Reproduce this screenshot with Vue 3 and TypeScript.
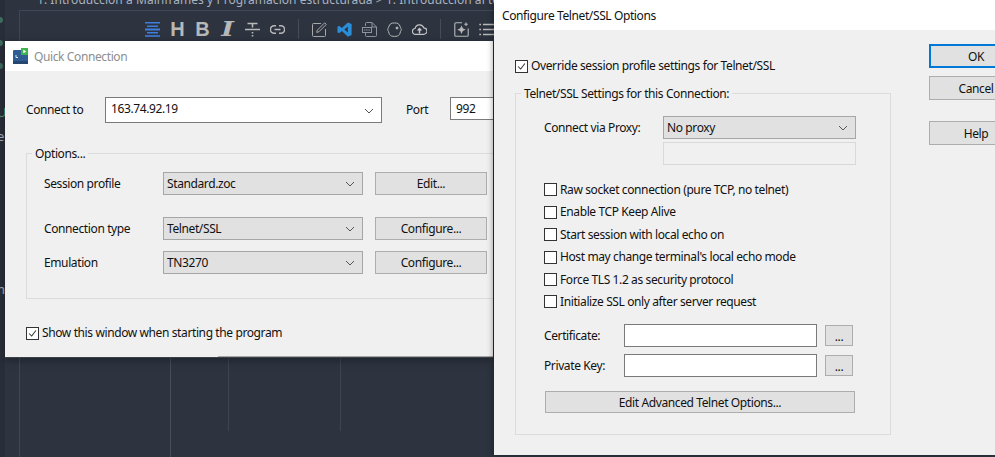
<template>
  <div class="stage">
    <div class="rail">
      <span v-for="y in 3" :key="y" class="rail-dot"></span>
      <span class="rail-u">U</span>
      <span class="rail-e">e</span>
      <span class="rail-n">n</span>
    </div>

    <div class="editor">
      <div class="crumb">1. Introducción a Mainframes y Programación estructurada &gt; 1. Introducción al tema</div>
      <div class="editor-box">
        <div class="toolbar">
          <svg class="ico" viewBox="0 0 15 15" fill="#3f7fdc">
            <rect x="0" y="0" width="15" height="1.5" />
            <rect x="2" y="3.5" width="11" height="1.5" />
            <rect x="0" y="6.5" width="15" height="2" />
            <rect x="2" y="10" width="11" height="1.5" />
            <rect x="0" y="13.2" width="15" height="1.6" />
          </svg>
          <span class="ico glyph">H</span>
          <span class="ico glyph">B</span>
          <span class="ico glyph slant">I</span>
          <svg class="ico" viewBox="0 0 15 15" fill="none" stroke="#b8b8b8" stroke-width="1.6">
            <path d="M0 7.500h15M2.500 1.500h10M7.500 1.500v4M7.500 10v1.500M7.500 13v1.500" />
          </svg>
          <svg class="ico" viewBox="0 0 15 15" fill="none" stroke="#b8b8b8" stroke-width="1.5">
            <path d="M6 3.700H4.200a3.800 3.800 0 0 0 0 7.600H6M9 3.700h1.800a3.800 3.800 0 0 1 0 7.600H9M4.500 7.500h6" />
          </svg>
          <i class="sep"></i>
          <svg class="ico" viewBox="0 0 15 15" fill="none" stroke="#a9a9a9" stroke-width="1">
            <path d="M9 1.500H1.500a1 1 0 0 0-1 1v11a1 1 0 0 0 1 1h11a1 1 0 0 0 1-1V7" />
            <path d="M12.700.8l1.600 1.600-7.400 7.400-2.200.6.6-2.200z" />
          </svg>
          <svg class="ico" viewBox="0 0 16 16" fill="#2b8ed9">
            <path fill-rule="evenodd" d="M11.600.4 15.600 2.200V13.800L11.600 15.600 5.200 9.500 2.200 11.900.5 11V5L2.200 4.100 5.200 6.500ZM11.600 4.700 7.800 8 11.600 11.300Z" />
          </svg>
          <svg class="ico" viewBox="0 0 15 15" fill="none" stroke="#8f959e" stroke-width="1">
            <path d="M3.500 4V1.500a1 1 0 0 1 1-1H10L14.500 5v8.500a1 1 0 0 1-1 1h-9a1 1 0 0 1-1-1V11" />
            <path d="M10 .5V5h4.500" />
            <rect x=".5" y="5.500" width="9" height="5" />
            <path d="M2 8h6" stroke-dasharray="1.500 .7" />
          </svg>
          <svg class="ico" viewBox="0 0 15 15" fill="none" stroke="#b8b8b8" stroke-width="1">
            <path d="M4 1.500C5 .8 10 .8 11 1.500 12 2.200 12.800 3.500 13.500 5.500 14.500 7 14.500 8 13.500 9.500 13 12 12 13.500 10.500 14 8.500 14.500 6.500 14.500 4.500 14 3 13.500 2 12 1.500 9.500 .5 8 .5 7 1.500 5.500 2.200 3.500 3 2.200 4 1.500Z" />
            <circle cx="10" cy="6" r="1" fill="#b8b8b8" />
          </svg>
          <svg class="ico" viewBox="0 0 15 15" fill="none" stroke="#c4c4c4" stroke-width="1.200">
            <path d="M3.800 12.300H3.500a2.900 2.900 0 0 1-.4-5.800 4.500 4.500 0 0 1 8.700-.6 3.200 3.200 0 0 1-.2 6.400h-7.800Z" />
            <path d="M7.500 11.500V6.800M5.600 8.500l1.900-1.900 1.900 1.900" stroke-width="1.400" />
          </svg>
          <i class="sep"></i>
          <svg class="ico" viewBox="0 0 15 15" fill="none" stroke="#b8b8b8" stroke-width="1.100">
            <path d="M8 .8H1.800a1 1 0 0 0-1 1v11.400a1 1 0 0 0 1 1h11.400a1 1 0 0 0 1-1V6.500" />
            <path d="M7.500 4.800 8.400 6.800 10.400 7.700 8.400 8.600 7.500 10.600 6.600 8.600 4.600 7.700 6.600 6.800Z" fill="#b8b8b8" />
            <path d="M12 .5V4M10.300 2.200h3.500" />
          </svg>
          <svg class="ico" viewBox="0 0 15 15" fill="none" stroke="#b8b8b8" stroke-width="1.400">
            <path d="M4 2.500h11M4 7.500h11M4 12.500h11M.3 2.500h1.800M.3 7.500h1.800M.3 12.500h1.800" />
          </svg>
        </div>
        <div class="doc-cols">
          <div class="col-gap"></div>
          <div class="col-main">
            <div class="col-cell cell-a"></div>
            <div class="col-cell cell-b"></div>
          </div>
        </div>
      </div>
    </div>

    <section class="win quick">
      <header class="titlebar">
        <svg class="app-icon" viewBox="0 0 16 16">
          <rect x="0" y="2" width="15" height="14" rx="1" fill="#2f5c92" />
          <rect x="0" y="13" width="15" height="3" fill="#24466f" />
          <path d="M3 7v2.500h2" stroke="#dbe6f2" fill="none" stroke-width="1" />
          <rect x="8" y="0" width="7" height="7" fill="#3fb34f" />
          <path d="M10.300 1.700l3 1.800-3 1.800z" fill="#fff" />
        </svg>
        <span class="title-muted">Quick Connection</span>
      </header>
      <div class="quick-body">
        <div class="connect-row">
          <label class="connect-label">Connect to</label>
          <div class="combo-input">
            <span>163.74.92.19</span>
            <svg class="chev" viewBox="0 0 10 6"><path d="M1 1l4 4 4-4" /></svg>
          </div>
          <label class="port-label">Port</label>
          <div class="port-input">992</div>
        </div>

        <div class="group quick-group">
          <div class="legend">Options...</div>
          <div class="opt-grid">
            <span>Session profile</span>
            <div class="select"><span>Standard.zoc</span><svg class="chev" viewBox="0 0 10 6"><path d="M1 1l4 4 4-4" /></svg></div>
            <button class="btn opt-btn">Edit...</button>

            <span>Connection type</span>
            <div class="select"><span>Telnet/SSL</span><svg class="chev" viewBox="0 0 10 6"><path d="M1 1l4 4 4-4" /></svg></div>
            <button class="btn opt-btn">Configure...</button>

            <span>Emulation</span>
            <div class="select"><span>TN3270</span><svg class="chev" viewBox="0 0 10 6"><path d="M1 1l4 4 4-4" /></svg></div>
            <button class="btn opt-btn">Configure...</button>
          </div>
        </div>

        <label class="check show-check">
          <span class="box">
            <svg viewBox="0 0 13 13"><path d="M2.500 6.500l3 3 5-6.500" /></svg>
          </span>
          Show this window when starting the program
        </label>
      </div>
      <i class="quick-edge"></i>
    </section>

    <section class="win config">
      <header class="titlebar config-title">Configure Telnet/SSL Options</header>
      <div class="config-body">
        <div class="config-main">
          <label class="check">
            <span class="box">
              <svg viewBox="0 0 13 13"><path d="M2.500 6.500l3 3 5-6.500" /></svg>
            </span>
            Override session profile settings for Telnet/SSL
          </label>

          <div class="group config-group">
            <div class="legend">Telnet/SSL Settings for this Connection:</div>
            <div class="proxy-grid">
              <span>Connect via Proxy:</span>
              <div class="select"><span>No proxy</span><svg class="chev" viewBox="0 0 10 6"><path d="M1 1l4 4 4-4" /></svg></div>
              <span></span>
              <div class="disabled-field"></div>
            </div>

            <div class="check-list">
              <label v-for="item in checks" :key="item" class="check">
                <span class="box"></span>
                {{ item }}
              </label>
            </div>

            <div class="file-grid">
              <template v-for="row in fileRows" :key="row">
                <span>{{ row }}</span>
                <div class="text-field"></div>
                <button class="btn dots">...</button>
              </template>
            </div>

            <button class="btn advanced">Edit Advanced Telnet Options...</button>
          </div>
        </div>

        <div class="config-side">
          <button class="btn side-btn default-btn">OK</button>
          <button class="btn side-btn">Cancel</button>
          <button class="btn side-btn help-btn">Help</button>
        </div>
      </div>
    </section>
  </div>
</template>

<script setup lang="ts">
const checks: string[] = [
  'Raw socket connection (pure TCP, no telnet)',
  'Enable TCP Keep Alive',
  'Start session with local echo on',
  "Host may change terminal's local echo mode",
  'Force TLS 1.2 as security protocol',
  'Initialize SSL only after server request'
];

const fileRows: string[] = ['Certificate:', 'Private Key:'];
</script>

<style>
html,
body {
  margin: 0;
  background: #2d3440;
}
</style>

<style scoped>
.stage {
  position: relative;
  display: flex;
  width: 995px;
  height: 457px;
  overflow: hidden;
  background: #2d3440;
  font-family: "Noto Sans", sans-serif;
  font-size: 12px;
  letter-spacing: -0.39px;
  color: #111;
}

.rail {
  display: flex;
  flex-direction: column;
  flex: none;
  width: 5px;
  overflow: hidden;
  background: #282e39;
  padding-top: 17px;
}

.rail-dot {
  flex: none;
  width: 3px;
  height: 6px;
  margin-bottom: 17px;
  border-radius: 0 3px 3px 0;
  background: #3f6b5e;
}

.rail-u,
.rail-e,
.rail-n {
  flex: none;
  height: 16px;
  margin-left: -3px;
  line-height: 16px;
  font-size: 13px;
}

.rail-u {
  margin-top: 18px;
  color: #4f9a7f;
}

.rail-e {
  margin-top: 8px;
  color: #a9b0bb;
}

.rail-n {
  margin-top: 137px;
  color: #a9b0bb;
}

.editor {
  flex: 1;
  min-width: 0;
  padding-left: 14px;
}

.crumb {
  height: 10px;
  margin-left: 18px;
  overflow: hidden;
  white-space: nowrap;
  line-height: 0;
  font-size: 12px;
  letter-spacing: 0.05px;
  color: #aab2bf;
}

.editor-box {
  display: flex;
  flex-direction: column;
  height: 447px;
  border-top: 1px solid #3f4756;
  border-left: 1px solid #3f4756;
}

.toolbar {
  display: flex;
  align-items: center;
  flex: none;
  height: 36px;
  padding-left: 125px;
}

.ico {
  flex: none;
  width: 15px;
  height: 15px;
  margin-right: 10px;
}

.glyph {
  font-family: "Liberation Sans", sans-serif;
  font-size: 20px;
  font-weight: 700;
  line-height: 15px;
  letter-spacing: 0;
  text-align: center;
  color: #b8b8b8;
}

.slant {
  font-family: "DejaVu Serif", serif;
  font-style: italic;
  transform: scaleX(1.35);
}

.sep {
  flex: none;
  width: 1px;
  height: 20px;
  margin: 0 13px 0 3px;
  background: #454d5b;
}

.doc-cols {
  display: flex;
  flex: 1;
  min-height: 0;
}

.col-gap {
  flex: none;
  width: 150px;
}

.col-main {
  display: flex;
  flex: 1;
  border-left: 1px solid #454d5b;
}

.col-cell {
  flex: none;
  height: 384px;
  border-left: 1px solid #3d4452;
}

.cell-a {
  width: 111px;
  margin-left: 57px;
}

.cell-b {
  width: 100px;
}

.win {
  position: absolute;
  background: #f0f0f0;
}

.quick {
  left: 5px;
  top: 41px;
  width: 488px;
  height: 316px;
  overflow: hidden;
  border-bottom: 1px solid #3c4048;
  box-shadow: 0 2px 8px rgba(0, 0, 0, 0.35);
}

.quick-edge {
  position: absolute;
  left: 213px;
  right: 0;
  bottom: 0;
  height: 1px;
  background: #a6a6a6;
}

.config {
  left: 494px;
  top: 0;
  width: 501px;
  height: 455px;
  box-shadow: -2px 0 5px rgba(0, 0, 0, 0.28);
}

.titlebar {
  display: flex;
  align-items: center;
  height: 30px;
  background: #fff;
}

.quick .titlebar {
  gap: 5px;
  padding-left: 8px;
}

.app-icon {
  flex: none;
  width: 16px;
  height: 16px;
  margin-top: -1px;
}

.title-muted {
  color: #8e8e8e;
}

.config-title {
  padding-left: 8px;
}

.quick-body {
  padding: 26px 0 0 21px;
}

.connect-row {
  display: flex;
  white-space: nowrap;
}

.connect-label {
  flex: none;
  width: 79px;
  line-height: 25px;
}

.combo-input {
  display: flex;
  flex: none;
  align-items: center;
  justify-content: space-between;
  box-sizing: border-box;
  width: 277px;
  height: 26px;
  padding: 0 7px 3px 5px;
  background: #fff;
  border: 1px solid #7a7a7a;
}

.combo-input .chev {
  margin-top: 5px;
}

.port-label {
  flex: none;
  width: 44px;
  margin-left: 24px;
  line-height: 25px;
}

.port-input {
  flex: none;
  box-sizing: border-box;
  width: 60px;
  height: 23px;
  padding-left: 5px;
  line-height: 21px;
  background: #fff;
  border: 1px solid #7a7a7a;
}

.group {
  box-sizing: border-box;
  border: 1px solid #dcdcdc;
}

.legend {
  width: fit-content;
  height: 16px;
  margin-top: -8px;
  padding: 0 3px;
  line-height: 16px;
  background: #f0f0f0;
}

.quick-group {
  width: 490px;
  height: 146px;
  margin-top: 30px;
  padding-left: 17px;
}

.quick-group .legend {
  margin-left: -12px;
}

.opt-grid {
  display: grid;
  grid-template-columns: 119px 200px 124px;
  grid-template-rows: 23px 34px 23px;
  row-gap: 11px;
  align-items: end;
  margin-top: 10px;
}

.opt-grid > span {
  line-height: 23px;
}

.select {
  display: flex;
  align-items: center;
  justify-content: space-between;
  box-sizing: border-box;
  height: 23px;
  padding: 0 7px 0 3px;
  background: #e1e1e1;
  border: 1px solid #a6a6a6;
}

.chev {
  flex: none;
  width: 10px;
  height: 6px;
}

.chev path {
  fill: none;
  stroke: #555;
  stroke-width: 1;
}

.btn {
  box-sizing: border-box;
  margin: 0;
  padding: 0;
  font: inherit;
  letter-spacing: inherit;
  color: #111;
  background: #e1e1e1;
  border: 1px solid #adadad;
  border-radius: 0;
}

.opt-btn {
  justify-self: end;
  width: 112px;
  height: 23px;
}

.check {
  display: flex;
  align-items: center;
  gap: 3px;
  line-height: 16px;
  white-space: nowrap;
}

.box {
  display: block;
  flex: none;
  box-sizing: border-box;
  width: 13px;
  height: 13px;
  background: #fff;
  border: 1px solid #333;
}

.box svg {
  display: block;
  width: 11px;
  height: 11px;
}

.box path {
  fill: none;
  stroke: #333;
  stroke-width: 1.200;
}

.show-check {
  margin-top: 26px;
}

.config-body {
  display: flex;
}

.config-main {
  flex: none;
  width: 376px;
  margin-left: 21px;
  padding-top: 28px;
}

.config-group {
  width: 376px;
  height: 342px;
  margin-top: 19px;
  padding-left: 28px;
}

.config-group .legend {
  margin-left: -23px;
}

.proxy-grid {
  display: grid;
  grid-template-columns: 119px 193px;
  grid-auto-rows: 23px;
  row-gap: 3px;
  align-items: center;
  margin-top: 14px;
}

.disabled-field {
  height: 23px;
  box-sizing: border-box;
  background: #f0f0f0;
  border: 1px solid #d9d9d9;
}

.check-list {
  display: grid;
  grid-auto-rows: 22.4px;
  margin-top: 13.8px;
}

.file-grid {
  display: grid;
  grid-template-columns: 80px 193px 36px;
  grid-auto-rows: 23px;
  row-gap: 7px;
  align-items: center;
  margin-top: 11px;
}

.text-field {
  height: 23px;
  box-sizing: border-box;
  background: #fff;
  border: 1px solid #7a7a7a;
}

.dots {
  width: 28px;
  height: 21px;
  margin-left: 8px;
  line-height: 22px;
}

.advanced {
  display: block;
  width: 310px;
  height: 22px;
  margin: 14px 0 0 1px;
}

.config-side {
  display: flex;
  flex-direction: column;
  flex: none;
  width: 94px;
  margin-left: 38px;
  padding-top: 14px;
}

.side-btn {
  flex: none;
  width: 94px;
  height: 24px;
  margin-top: 8px;
}

.default-btn {
  margin-top: 0;
  border: 2px solid #0078d7;
}

.help-btn {
  margin-top: 21px;
}
</style>
